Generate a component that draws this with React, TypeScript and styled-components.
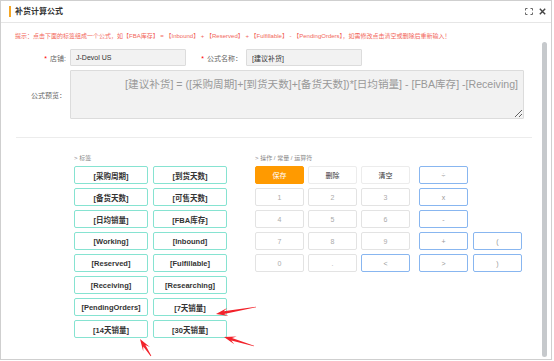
import React from 'react'
import styled, { createGlobalStyle } from 'styled-components'

const GlobalStyle = createGlobalStyle`
  html, body {
    margin: 0;
    padding: 0;
    background: #fff;
  }
  body {
    font-family: "Liberation Sans", "Noto Sans CJK SC", sans-serif;
    color: #333;
  }
  * {
    box-sizing: border-box;
  }
`

type Point = [number, number]

const tags = [
  '[采购周期]', '[到货天数]',
  '[备货天数]', '[可售天数]',
  '[日均销量]', '[FBA库存]',
  '[Working]', '[Inbound]',
  '[Reserved]', '[Fulfillable]',
  '[Receiving]', '[Researching]',
  '[PendingOrders]', '[7天销量]',
  '[14天销量]', '[30天销量]',
]

type Kind = 'primary' | 'action' | 'num' | 'op'

const keypad: { label: string; kind: Kind }[] = [
  { label: '保存', kind: 'primary' },
  { label: '删除', kind: 'action' },
  { label: '清空', kind: 'action' },
  { label: '1', kind: 'num' },
  { label: '2', kind: 'num' },
  { label: '3', kind: 'num' },
  { label: '4', kind: 'num' },
  { label: '5', kind: 'num' },
  { label: '6', kind: 'num' },
  { label: '7', kind: 'num' },
  { label: '8', kind: 'num' },
  { label: '9', kind: 'num' },
  { label: '0', kind: 'num' },
  { label: '.', kind: 'num' },
  { label: '<', kind: 'op' },
]

// operators: second column only has ( and ) at the bottom
const operators: (string | null)[] = ['÷', null, 'x', null, '-', null, '+', '(', '>', ')']

// tail -> tip, in page pixels
const arrows: [Point, Point][] = [
  [[256, 307], [216, 314]],
  [[254, 346], [224, 337]],
  [[151, 356], [140, 339]],
]

function arrowPoints([x1, y1]: Point, [x2, y2]: Point) {
  const dx = x2 - x1
  const dy = y2 - y1
  const len = Math.hypot(dx, dy)
  const ux = dx / len
  const uy = dy / len
  const nx = -uy
  const ny = ux
  const at = (d: number, w: number): string =>
    `${(x2 - ux * d + nx * w).toFixed(1)},${(y2 - uy * d + ny * w).toFixed(1)}`
  return [
    at(len, 0.3),
    at(8, 1.3),
    at(12, 4),
    at(0, 0),
    at(12, -4),
    at(8, -1.3),
    at(len, -0.3),
  ].join(' ')
}

export default function App() {
  return (
    <>
      <GlobalStyle />
      <Window>
        <Header>
          <Title>补货计算公式</Title>
          <Tools>
            <svg width="8" height="7" viewBox="0 0 8 7">
              <g stroke="#666" strokeWidth="1" fill="none">
                <path d="M0.5 2.5V0.5H2.5M5.5 0.5H7.5V2.5M7.5 4.5V6.5H5.5M2.5 6.5H0.5V4.5" />
              </g>
            </svg>
            <svg width="7" height="7" viewBox="0 0 7 7">
              <path d="M0.8 0.8L6.2 6.2M6.2 0.8L0.8 6.2" stroke="#444" strokeWidth="1.4" />
            </svg>
          </Tools>
        </Header>
        <Body>
          <Content>
            <Tip>
              提示：点击下面的标签组成一个公式，如【FBA库存】 = 【Inbound】 + 【Reserved】 + 【Fulfillable】 - 【PendingOrders】，如需修改点击清空或删除后重新输入！
            </Tip>
            <FormRow>
              <Label $width={69}>
                <Star>*</Star>店铺:
              </Label>
              <Field readOnly value="J-Devol US" />
              <Label $width={60}>
                <Star>*</Star>公式名称：
              </Label>
              <Field readOnly value="[建议补货]" />
            </FormRow>
            <FormRow $top={4}>
              <Label $width={69}>公式预览：</Label>
              <Preview
                readOnly
                value="[建议补货] = ([采购周期]+[到货天数]+[备货天数])*[日均销量] - [FBA库存] -[Receiving]"
              />
            </FormRow>
            <Divider />
            <Panels>
              <Panel>
                <PanelTitle>&gt; 标签</PanelTitle>
                <TagGrid>
                  {tags.map(t => (
                    <Tag key={t}>{t}</Tag>
                  ))}
                </TagGrid>
              </Panel>
              <Panel $left={28}>
                <PanelTitle>&gt; 操作 / 常量 / 运算符</PanelTitle>
                <Calc>
                  <KeyGrid>
                    {keypad.map(k => (
                      <Key key={k.label} $kind={k.kind}>{k.label}</Key>
                    ))}
                  </KeyGrid>
                  <OpGrid>
                    {operators.map((o, i) =>
                      o ? <Key key={i} $kind="op">{o}</Key> : <span key={i} />
                    )}
                  </OpGrid>
                </Calc>
              </Panel>
            </Panels>
          </Content>
          <ScrollTrack>
            <Thumb />
          </ScrollTrack>
        </Body>
        <Overlay width="552" height="360" viewBox="0 0 552 360">
          {arrows.map(([a, b], i) => (
            <polygon key={i} points={arrowPoints(a, b)} fill="#f2222a" />
          ))}
        </Overlay>
      </Window>
    </>
  )
}

const Window = styled.div`
  position: relative;
  width: 552px;
  height: 360px;
  border: 1px solid #cfcfcf;
  display: flex;
  flex-direction: column;
  background: #fff;
`

const Header = styled.div`
  height: 22px;
  flex-shrink: 0;
  display: flex;
  align-items: center;
  padding: 0 5px 0 8px;
  border-bottom: 1px solid #e6e6e6;
`

const Title = styled.div`
  border-left: 2px solid #f5a623;
  padding-left: 4px;
  font-size: 8px;
  line-height: 11px;
  font-weight: bold;
  color: #333;
`

const Tools = styled.div`
  margin-left: auto;
  display: flex;
  align-items: center;
  gap: 6px;
`

const Body = styled.div`
  flex: 1;
  display: flex;
  min-height: 0;
`

const Content = styled.div`
  flex: 1;
`

const Tip = styled.div`
  margin: 9px 0 0 14px;
  font-size: 6px;
  line-height: 8px;
  color: #f2665a;
  white-space: nowrap;
`

const FormRow = styled.div<{ $top?: number }>`
  display: flex;
  align-items: center;
  margin-top: ${p => p.$top ?? 9}px;
`

const Label = styled.label<{ $width: number }>`
  width: ${p => p.$width}px;
  padding-right: 4px;
  text-align: right;
  font-size: 7px;
  color: #666;
  white-space: nowrap;
`

const Star = styled.span`
  color: #f00;
  margin-right: 3px;
`

const Field = styled.input`
  width: 116px;
  height: 17px;
  padding: 0 5px;
  border: 1px solid #dcdcdc;
  border-radius: 1px;
  background: #f2f2f2;
  font-family: inherit;
  font-size: 7px;
  color: #333;
  outline: none;
`

const Preview = styled.textarea`
  width: 454px;
  height: 49px;
  padding: 6px 5px 0;
  border: 1px solid #dcdcdc;
  border-radius: 1px;
  background: #f2f2f2;
  font-family: inherit;
  font-size: 10.6px;
  line-height: 14px;
  color: #999;
  text-align: right;
  outline: none;
`

const Divider = styled.div`
  margin: 18px 0 0 15px;
  width: 516px;
  border-top: 1px solid #ececec;
`

const Panels = styled.div`
  display: flex;
  padding: 16px 0 0 73px;
`

const Panel = styled.div<{ $left?: number }>`
  margin-left: ${p => p.$left ?? 0}px;
`

const PanelTitle = styled.div`
  font-size: 6px;
  line-height: 8px;
  color: #888;
  margin-bottom: 4px;
`

const TagGrid = styled.div`
  display: grid;
  grid-template-columns: 74px 74px;
  column-gap: 5px;
  row-gap: 4px;
`

const Tag = styled.div`
  height: 18px;
  display: flex;
  align-items: center;
  justify-content: center;
  border: 1px solid #86e3d1;
  border-radius: 2px;
  font-size: 7.5px;
  font-weight: bold;
  color: #333;
`

const Calc = styled.div`
  display: flex;
`

const KeyGrid = styled.div`
  display: grid;
  grid-template-columns: repeat(3, 49px);
  column-gap: 4px;
  row-gap: 4px;
`

const OpGrid = styled.div`
  display: grid;
  grid-template-columns: repeat(2, 49px);
  grid-auto-rows: 18px;
  column-gap: 5px;
  row-gap: 4px;
  margin-left: 9px;
`

const keyColors: Record<Kind, { bg: string; border: string; color: string }> = {
  primary: { bg: '#ff9a00', border: '#ff9a00', color: '#fff' },
  action: { bg: '#fff', border: '#ececec', color: '#333' },
  num: { bg: '#fff', border: '#e3e3e3', color: '#aaa' },
  op: { bg: '#fff', border: '#88b6f0', color: '#999' },
}

const Key = styled.div<{ $kind: Kind }>`
  height: 18px;
  display: flex;
  align-items: center;
  justify-content: center;
  background: ${p => keyColors[p.$kind].bg};
  border: 1px solid ${p => keyColors[p.$kind].border};
  border-radius: 2px;
  font-size: 7px;
  color: ${p => keyColors[p.$kind].color};
`

const ScrollTrack = styled.div`
  width: 10px;
  padding: 19px 4px 2px 1px;
  display: flex;
`

const Thumb = styled.div`
  flex: 1;
  background: #c6c9cc;
  border-radius: 3px;
`

const Overlay = styled.svg`
  position: absolute;
  left: -1px;
  top: -1px;
  pointer-events: none;
`
